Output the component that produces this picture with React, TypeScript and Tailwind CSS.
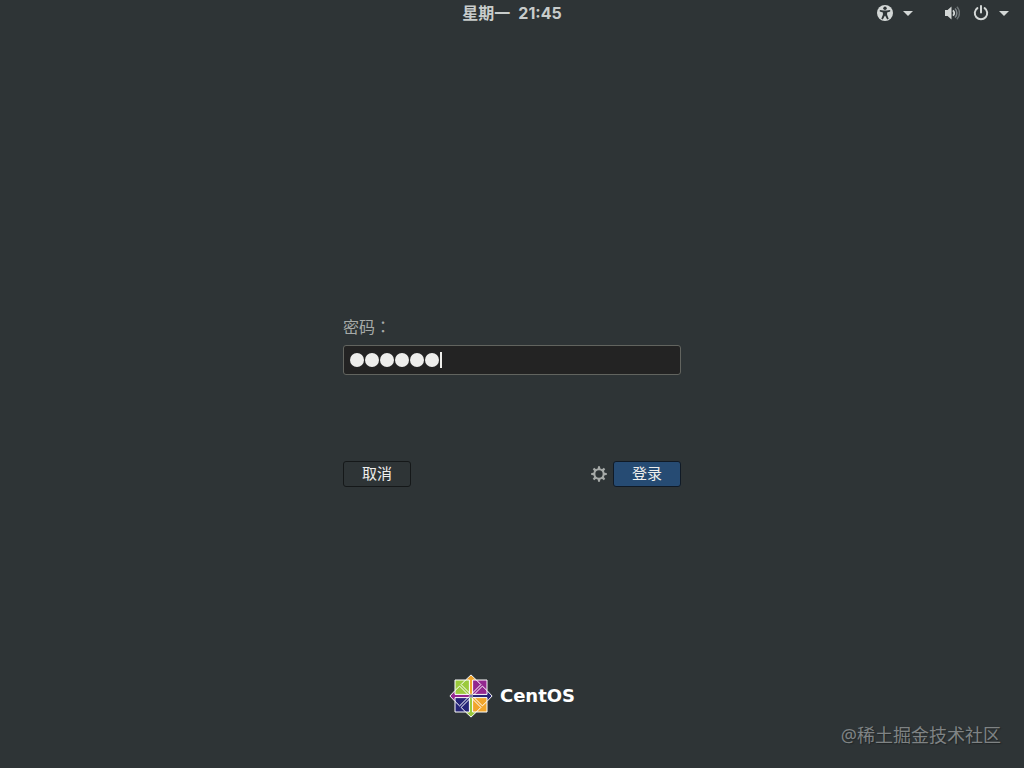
import { useState } from "react";

function AccessibilityIcon() {
  return (
    <svg viewBox="0 0 16 16" className="size-4" aria-hidden="true">
      <circle cx="8" cy="8" r="8" fill="#d3d7d6" />
      <circle cx="8" cy="3.2" r="1.7" fill="#2e3436" />
      <path d="M2.8 5 6.4 5.6h3.2L13.2 5v1.6l-3.1.9v2.3l1.6 4-1.5.6L8.2 10.8h-.4L5.8 14.4l-1.5-.6L5.9 9.8V7.5l-3.1-.9z" fill="#2e3436" />
    </svg>
  );
}

function VolumeIcon() {
  return (
    <svg viewBox="0 0 16 16" className="size-4" aria-hidden="true">
      <path d="M1 5h2.6L7.5 1.6v12.8L3.6 11H1z" fill="#d3d7d6" />
      <path d="M9 5.3a4 4 0 0 1 0 5.4" fill="none" stroke="#d3d7d6" strokeWidth="1.8" />
      <path d="M11 3.5a6.3 6.3 0 0 1 0 9" fill="none" stroke="#80878a" strokeWidth="1.5" />
      <path d="M12.9 1.8a8.8 8.8 0 0 1 0 12.4" fill="none" stroke="#6c7375" strokeWidth="1.5" />
    </svg>
  );
}

function PowerIcon() {
  return (
    <svg viewBox="0 0 16 16" className="size-4" aria-hidden="true">
      <path d="M4.4 3.1a6.2 6.2 0 1 0 7.2 0M8 1v6.5" fill="none" stroke="#d3d7d6" strokeWidth="2" strokeLinecap="round" />
    </svg>
  );
}

function Caret() {
  return (
    <svg viewBox="0 0 10 5" className="h-[5px] w-[10px]" aria-hidden="true">
      <path d="M0 0h10L5 5z" fill="#d3d7d6" />
    </svg>
  );
}

const teeth = [0, 45, 90, 135, 180, 225, 270, 315];

function GearIcon() {
  return (
    <svg viewBox="0 0 16 16" className="size-4" aria-hidden="true">
      <circle cx="8" cy="8" r="4.7" fill="none" stroke="#a6aaa8" strokeWidth="2.1" />
      {teeth.map((a) => (
        <path key={a} d="M6.7 3 7 .2h2L9.3 3z" fill="#a6aaa8" transform={`rotate(${a} 8 8)`} />
      ))}
    </svg>
  );
}

const quadrants = [
  { angle: 0, square: "#9bca3c", point: "#f0a52b" },
  { angle: 90, square: "#93278f", point: "#262577" },
  { angle: 180, square: "#f0a52b", point: "#9bca3c" },
  { angle: 270, square: "#262577", point: "#93278f" },
];

function CentOSMark() {
  return (
    <svg viewBox="0 0 44 44" className="size-11" aria-hidden="true">
      {quadrants.map((q) => (
        <g key={q.angle} transform={`rotate(${q.angle} 22 22)`}>
          <path d="M22 1 28 7H24.2V19L22 21 19.8 19V7H16z" fill={q.point} />
        </g>
      ))}
      {quadrants.map((q) => (
        <g key={q.angle} transform={`rotate(${q.angle} 22 22)`} stroke="#fff" strokeWidth="1">
          <path d="M6 6H20.4V20.4H6z" fill={q.square} />
          <path d="M16.6 6 12.1 10.6 21 19.5M6 16.6 10.6 12.1 19.5 21" fill="none" />
          <path d="M16.6 6 22 .9 27.4 6" fill="none" />
        </g>
      ))}
      <path d="M20.8 20.8h2.4v2.4h-2.4z" fill="#262577" stroke="#fff" strokeWidth=".7" />
    </svg>
  );
}

export default function App() {
  const [password, setPassword] = useState("centos");

  return (
    <div className="flex min-h-screen flex-col bg-[#2e3436] font-['Noto_Sans','Noto_Sans_CJK_SC',sans-serif] text-[#d3d7d6]">
      <header className="grid h-[26px] grid-cols-3 items-center px-[15px]">
        <time className="col-start-2 flex justify-center gap-2 font-['Inter','Noto_Sans_CJK_SC',sans-serif] text-[16px] leading-6 font-bold text-[#c8cccb]">
          <span>星期一</span>
          <span>21:45</span>
        </time>
        <div className="flex items-center justify-end gap-[31px]">
          <button type="button" aria-label="辅助功能" className="flex items-center gap-[10px]">
            <AccessibilityIcon />
            <Caret />
          </button>
          <button type="button" aria-label="系统菜单" className="flex items-center gap-[10px]">
            <VolumeIcon />
            <span className="flex items-center gap-[10px] pl-[3px]">
              <PowerIcon />
              <Caret />
            </span>
          </button>
        </div>
      </header>

      <main className="flex flex-1 flex-col items-center justify-center pt-[100px]">
        <form className="w-full max-w-[338px]" onSubmit={(e) => e.preventDefault()}>
          <label htmlFor="password" className="block font-['Noto_Sans_CJK_TC',sans-serif] text-[16px] leading-6 text-[#a6aaa8]">密码：</label>
          <div className="relative mt-[7px]">
            <input
              id="password"
              type="password"
              value={password}
              onChange={(e) => setPassword(e.target.value)}
              className="block h-[30px] w-full rounded-[3px] border border-[#62645f] bg-[#232323] px-[7px] text-transparent caret-transparent outline-none"
            />
            <div aria-hidden="true" className="pointer-events-none absolute inset-y-0 left-[7px] flex items-center gap-px">
              {Array.from(password, (_, i) => (
                <span key={i} className="size-[14px] rounded-full bg-[#eeeeec]" />
              ))}
              <span className="h-4 w-[2px] bg-[#eeeeec]" />
            </div>
          </div>
          <div className="mt-[86px] flex items-center justify-between">
            <button type="button" className="h-[26px] w-[68px] rounded-[3px] border border-[#151819] bg-[#2e3436] pb-[2px] text-[15px] leading-[22px] text-[#eeeeec]">取消</button>
            <div className="flex items-center gap-[6px]">
              <button type="button" aria-label="会话选项"><GearIcon /></button>
              <button type="submit" className="h-[26px] w-[68px] rounded-[3px] border border-[#101a26] bg-[#264b73] pb-[2px] text-[15px] leading-[22px] text-[#eeeeec]">登录</button>
            </div>
          </div>
        </form>
      </main>

      <footer className="grid grid-cols-3 px-[23px] pb-[21px]">
        <div className="col-start-2 mb-[29px] flex items-center justify-center gap-[7px]">
          <CentOSMark />
          <span className="font-['DejaVu_Sans',sans-serif] text-[18px] leading-6 font-bold text-white">CentOS</span>
        </div>
        <p className="self-end text-right text-[18px] leading-6 text-[#7f8384] [text-shadow:1px_1px_1px_#202526]">@稀土掘金技术社区</p>
      </footer>
    </div>
  );
}
